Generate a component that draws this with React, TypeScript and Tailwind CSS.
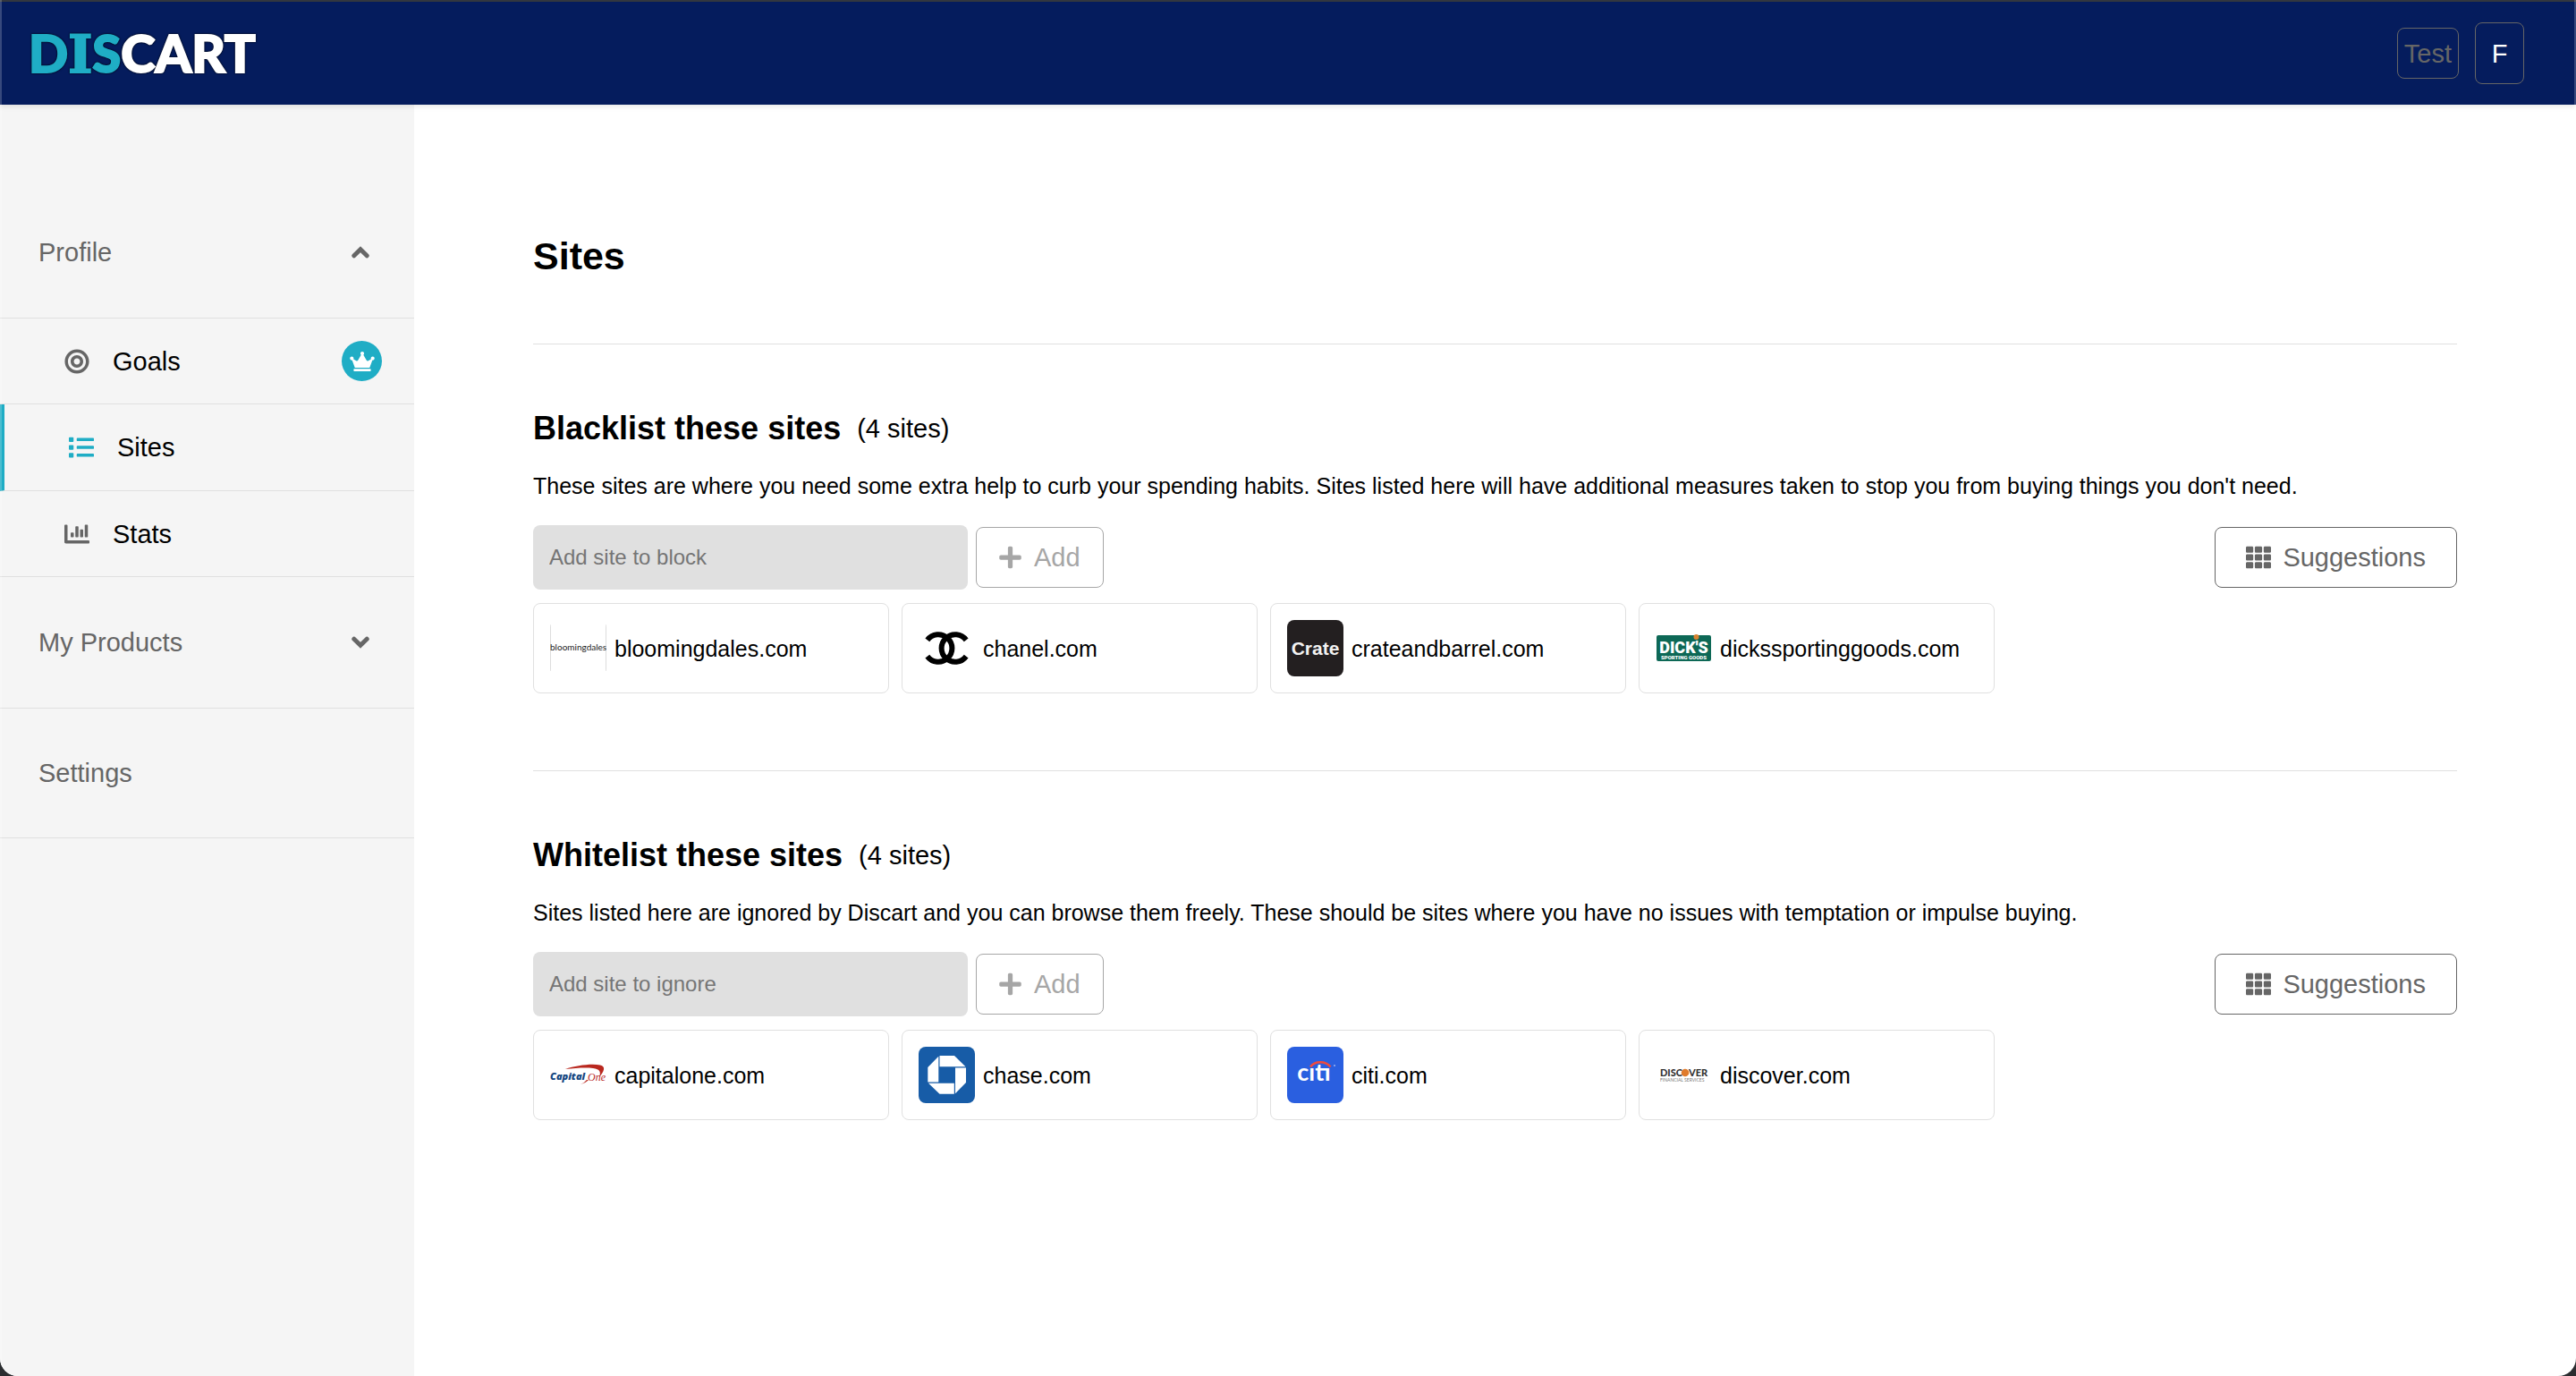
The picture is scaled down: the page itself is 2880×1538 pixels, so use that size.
import type { ReactNode } from "react";
import { FaBullseye, FaChartBar, FaCrown, FaList, FaPlus, FaTh } from "react-icons/fa";

type Site = { name: string; logo: ReactNode };

function Logo({ label, children }: { label: string; children: ReactNode }) {
  return (
    <svg
      viewBox="0 0 63 63"
      role="img"
      aria-label={label}
      className="size-[63px] shrink-0 rounded-lg"
    >
      {children}
    </svg>
  );
}

function Chevron({ up = false }: { up?: boolean }) {
  return (
    <svg
      viewBox="0 0 20 14"
      aria-hidden="true"
      className="h-[14px] w-5"
      fill="none"
      stroke="currentColor"
      strokeWidth="5"
      strokeLinecap="round"
    >
      <path d={up ? "M2.800 10.800L10 3.800L17.200 10.800" : "M2.800 3.200L10 10.200L17.200 3.200"} />
    </svg>
  );
}

const blacklist: Site[] = [
  {
    name: "bloomingdales.com",
    logo: (
      <Logo label="Bloomingdale's">
        <path d="M0.5 5V57M62.5 5V57" stroke="#dddddd" />
        <text x="0" y="34" fontFamily="Lato, sans-serif" fontSize="10" fill="#222222">
          bloomingdales
        </text>
      </Logo>
    ),
  },
  {
    name: "chanel.com",
    logo: (
      <Logo label="Chanel">
        <g fill="none" stroke="#000000" strokeWidth="6">
          <path d="M9.8 22.4A15.3 15.3 0 1 1 9.8 40.6" />
          <path d="M53.2 22.4A15.3 15.3 0 1 0 53.2 40.6" />
        </g>
      </Logo>
    ),
  },
  {
    name: "crateandbarrel.com",
    logo: (
      <Logo label="Crate">
        <rect width="63" height="63" fill="#231f20" />
        <text
          x="31.5"
          y="39"
          textAnchor="middle"
          fontFamily="'Liberation Sans', sans-serif"
          fontWeight="700"
          fontSize="21"
          fill="#f2f2f2"
        >
          Crate
        </text>
      </Logo>
    ),
  },
  {
    name: "dickssportinggoods.com",
    logo: (
      <Logo label="Dick's Sporting Goods">
        <rect x="1" y="17" width="61" height="29" rx="2" fill="#0d6856" />
        <text
          x="31.5"
          y="37"
          textAnchor="middle"
          fontFamily="Roboto, sans-serif"
          fontWeight="900"
          fontSize="18"
          fill="#ffffff"
        >
          DICK&apos;S
        </text>
        <text
          x="31.5"
          y="44"
          textAnchor="middle"
          fontFamily="Roboto, sans-serif"
          fontWeight="900"
          fontSize="6"
          fill="#ffffff"
        >
          SPORTING GOODS
        </text>
        <circle cx="45.5" cy="19" r="3" fill="#d9822f" />
      </Logo>
    ),
  },
];

const whitelist: Site[] = [
  {
    name: "capitalone.com",
    logo: (
      <Logo label="Capital One">
        <path d="M17 25C29 21 46 18.500 56 20.500C63 22 60 28 55 34C57 28 56 25 48 24C39 23 28 24 17 25Z" fill="#b9281f" />
        <path d="M34 42C38 41 41 39 43 37L41 37C39 39 37 41 34 42Z" fill="#b9281f" />
        <text
          x="0"
          y="37"
          fontFamily="'Open Sans', sans-serif"
          fontWeight="800"
          fontStyle="italic"
          fontSize="11"
          fill="#13457f"
        >
          Capital
        </text>
        <text
          x="42"
          y="38"
          fontFamily="'Liberation Serif', serif"
          fontStyle="italic"
          fontSize="12"
          fill="#b9281f"
        >
          One
        </text>
      </Logo>
    ),
  },
  {
    name: "chase.com",
    logo: (
      <Logo label="Chase">
        <rect width="63" height="63" fill="#175ca7" />
        <g fill="#ffffff">
          <path d="M23.500 10H40L52.500 22.300H23.500Z" />
          <path d="M41 23.500H53V40L41 52.200Z" />
          <path d="M11 40.700H39.800V52.800H23.500Z" />
          <path d="M22.300 10.800V39.500H10.300V23Z" />
        </g>
      </Logo>
    ),
  },
  {
    name: "citi.com",
    logo: (
      <Logo label="Citi">
        <rect width="63" height="63" fill="#2a5fe0" />
        <text
          x="30"
          y="38"
          textAnchor="middle"
          fontFamily="Lato, sans-serif"
          fontWeight="700"
          fontSize="27"
          fill="#ffffff"
        >
          cıtı
        </text>
        <path d="M26 22.500C31 15.500 43 15.500 48.500 22.500" fill="none" stroke="#ee4b3e" strokeWidth="2.600" />
        <circle cx="53" cy="21" r="1" fill="#9db6f2" />
      </Logo>
    ),
  },
  {
    name: "discover.com",
    logo: (
      <Logo label="Discover">
        <text x="5" y="33" fontFamily="Lato, sans-serif" fontWeight="900" fontSize="11" fill="#333333">
          DISC
        </text>
        <circle cx="33" cy="29" r="4.300" fill="#e07b2c" />
        <text x="37" y="33" fontFamily="Lato, sans-serif" fontWeight="900" fontSize="11" fill="#333333">
          VER
        </text>
        <text x="5" y="39" fontFamily="Lato, sans-serif" fontSize="5" fill="#777777">
          FINANCIAL SERVICES
        </text>
      </Logo>
    ),
  },
];

function SiteSection({
  title,
  description,
  placeholder,
  sites,
}: {
  title: string;
  description: string;
  placeholder: string;
  sites: Site[];
}) {
  return (
    <section className="border-t border-[#e0e0e0] pt-[74px] pb-[86px]">
      <div className="flex items-center gap-[18px]">
        <h2 className="text-[36px] leading-10 font-bold">{title}</h2>
        <span className="text-[29px] leading-10">({sites.length} sites)</span>
      </div>
      <p className="mt-[30px] text-[25px] leading-7">{description}</p>
      <div className="mt-[30px] flex items-center justify-between">
        <form className="flex items-center gap-[9px]" onSubmit={(e) => e.preventDefault()}>
          <input
            type="text"
            aria-label={placeholder}
            placeholder={placeholder}
            className="h-[72px] w-[486px] rounded-lg bg-[#e0e0e0] px-[18px] text-[24px] leading-7 outline-none placeholder:text-[#757575]"
          />
          <button
            type="submit"
            className="flex h-[68px] items-center gap-[14px] rounded-lg border border-[#a6a6a6] px-[25px] text-[29px] leading-8 text-[#a6a6a6]"
          >
            <FaPlus className="h-7 w-[25px]" />
            Add
          </button>
        </form>
        <button
          type="button"
          className="flex h-[68px] items-center gap-[13px] rounded-lg border border-[#666666] px-[34px] text-[29px] leading-8 text-[#666666]"
        >
          <FaTh className="size-7" />
          Suggestions
        </button>
      </div>
      <ul className="mt-[15px] flex flex-wrap gap-[14px]">
        {sites.map((site) => (
          <li
            key={site.name}
            className="flex w-[398px] items-center gap-[9px] rounded-lg border border-[#e0e0e0] p-[18px]"
          >
            {site.logo}
            <span className="text-[25px] leading-7">{site.name}</span>
          </li>
        ))}
      </ul>
    </section>
  );
}

export default function App() {
  return (
    <div className="min-h-screen bg-[#2b2d30] font-['Liberation_Sans',Arial,sans-serif] text-black">
      <div className="relative flex min-h-screen flex-col overflow-hidden rounded-b-[20px] bg-white">
        <header className="z-10 flex h-[117px] items-center justify-between border-t-2 border-[#33373f] bg-[#051c5d] pr-[58px] pl-[32px] shadow-[0_2px_6px_rgba(0,0,0,0.1)]">
          <a
            href="#home"
            className="font-[Lato,sans-serif] text-[58px] leading-[64px] font-black text-white drop-shadow-[0_0_1px_black] [-webkit-text-stroke:2px_currentColor] [stroke-linejoin:round]"
          >
            <span className="text-[#1fadc5]">
              D<span className="font-['DejaVu_Serif',serif]">I</span>S
            </span>
            CART
          </a>
          <div className="flex items-center gap-[18px] text-[29px] leading-8">
            <button type="button" className="h-[57px] rounded-lg border border-[#666666] px-[7px] text-[#666666]">
              Test
            </button>
            <button type="button" className="h-[69px] w-[55px] rounded-lg border border-[#666666] text-white">
              F
            </button>
          </div>
        </header>

        <div className="flex flex-1">
          <nav className="w-[463px] shrink-0 bg-[#f5f5f5] pt-[92px] text-[29px] leading-8">
            <button
              type="button"
              className="flex h-[147px] w-full items-center justify-between border-b border-[#e0e0e0] pr-[50px] pl-[43px] text-[#666666]"
            >
              Profile
              <Chevron up />
            </button>
            <a href="#goals" className="flex h-24 items-center border-b border-[#e0e0e0] pr-9 pl-[72px]">
              <FaBullseye className="size-7 text-[#666666]" />
              <span className="ml-[26px] flex-1">Goals</span>
              <span className="flex size-[45px] items-center justify-center rounded-full bg-[#1fadc5] text-white">
                <FaCrown className="h-[22px] w-7" />
              </span>
            </a>
            <a
              href="#sites"
              aria-current="page"
              className="flex h-[97px] items-center border-b border-l-5 border-b-[#e0e0e0] border-l-[#1fadc5] pl-[72px]"
            >
              <FaList className="size-7 text-[#1fadc5]" />
              <span className="ml-[26px]">Sites</span>
            </a>
            <a href="#stats" className="flex h-24 items-center border-b border-[#e0e0e0] pl-[72px]">
              <FaChartBar className="size-7 text-[#666666]" />
              <span className="ml-[26px]">Stats</span>
            </a>
            <button
              type="button"
              className="flex h-[147px] w-full items-center justify-between border-b border-[#e0e0e0] pr-[50px] pl-[43px] text-[#666666]"
            >
              My Products
              <Chevron />
            </button>
            <a
              href="#settings"
              className="flex h-[145px] items-center border-b border-[#e0e0e0] pl-[43px] text-[#666666]"
            >
              Settings
            </a>
          </nav>

          <main className="min-w-0 flex-1 px-[133px] pt-[145px]">
            <h1 className="mb-[74px] text-[43px] leading-[48px] font-bold">Sites</h1>
            <SiteSection
              title="Blacklist these sites"
              description="These sites are where you need some extra help to curb your spending habits. Sites listed here will have additional measures taken to stop you from buying things you don't need."
              placeholder="Add site to block"
              sites={blacklist}
            />
            <SiteSection
              title="Whitelist these sites"
              description="Sites listed here are ignored by Discart and you can browse them freely. These should be sites where you have no issues with temptation or impulse buying."
              placeholder="Add site to ignore"
              sites={whitelist}
            />
          </main>
        </div>
        <div className="pointer-events-none absolute inset-0 z-20 rounded-b-[20px] border-x-2 border-white/20" />
      </div>
    </div>
  );
}
